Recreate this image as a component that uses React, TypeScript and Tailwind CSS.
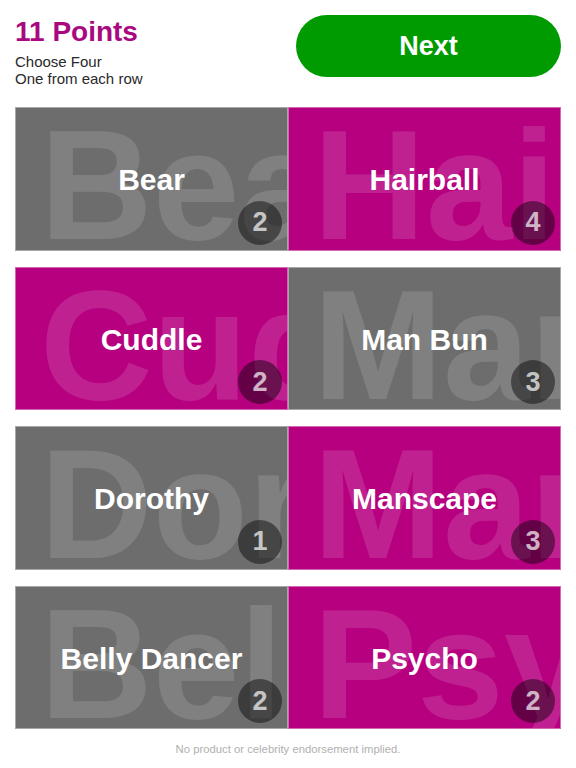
import React from "react";

type Cell = { word: string; n: number; pink: boolean };

const cells: Cell[] = [
  { word: "Bear", n: 2, pink: false },
  { word: "Hairball", n: 4, pink: true },
  { word: "Cuddle", n: 2, pink: true },
  { word: "Man Bun", n: 3, pink: false },
  { word: "Dorothy", n: 1, pink: false },
  { word: "Manscape", n: 3, pink: true },
  { word: "Belly Dancer", n: 2, pink: false },
  { word: "Psycho", n: 2, pink: true },
];

function Tile({ c }: { c: Cell }) {
  return (
    <div
      className={`relative h-[143.5px] overflow-hidden border border-white/40 ${
        c.pink ? "bg-[#b6007f]" : "bg-[#6d6d6d]"
      }`}
    >
      <div className="absolute left-[24px] top-[-1px] whitespace-nowrap text-[156px] font-bold leading-none text-white/[0.13]">
        {c.word}
      </div>
      <div className="absolute inset-0 flex items-center justify-center pt-[3px]">
        <span className="text-[30px] font-bold leading-none text-white">{c.word}</span>
      </div>
      <div className="absolute bottom-[5px] right-[5px] flex h-[44px] w-[44px] items-center justify-center rounded-full bg-black/45">
        <span className="text-[27px] font-bold leading-none text-white/70">{c.n}</span>
      </div>
    </div>
  );
}

export default function App() {
  return (
    <div
      className="flex h-[768px] w-[576px] flex-col bg-white"
      style={{ fontFamily: '"Liberation Sans", Arial, sans-serif' }}
    >
      <div className="flex h-[107px] items-start justify-between px-[15px]">
        <div className="flex flex-col pt-[16px]">
          <div className="text-[28px] font-bold leading-[32px] text-[#a9087f]">11 Points</div>
          <div className="mt-[5px] text-[15px] leading-[17px] text-[#2a2a2a]">Choose Four</div>
          <div className="text-[15px] leading-[17px] text-[#2a2a2a]">One from each row</div>
        </div>
        <div className="mt-[15px] flex h-[62px] w-[265px] items-center justify-center rounded-full bg-[#009b00]">
          <span className="text-[27px] font-bold leading-none text-white">Next</span>
        </div>
      </div>
      <div className="mx-[15px] grid grid-cols-2 gap-y-[16px]">
        {cells.map((c) => (
          <Tile key={c.word} c={c} />
        ))}
      </div>
      <div className="mt-[13px] text-center text-[11.3px] leading-[14px] text-[#b0b0b0]">
        No product or celebrity endorsement implied.
      </div>
    </div>
  );
}
